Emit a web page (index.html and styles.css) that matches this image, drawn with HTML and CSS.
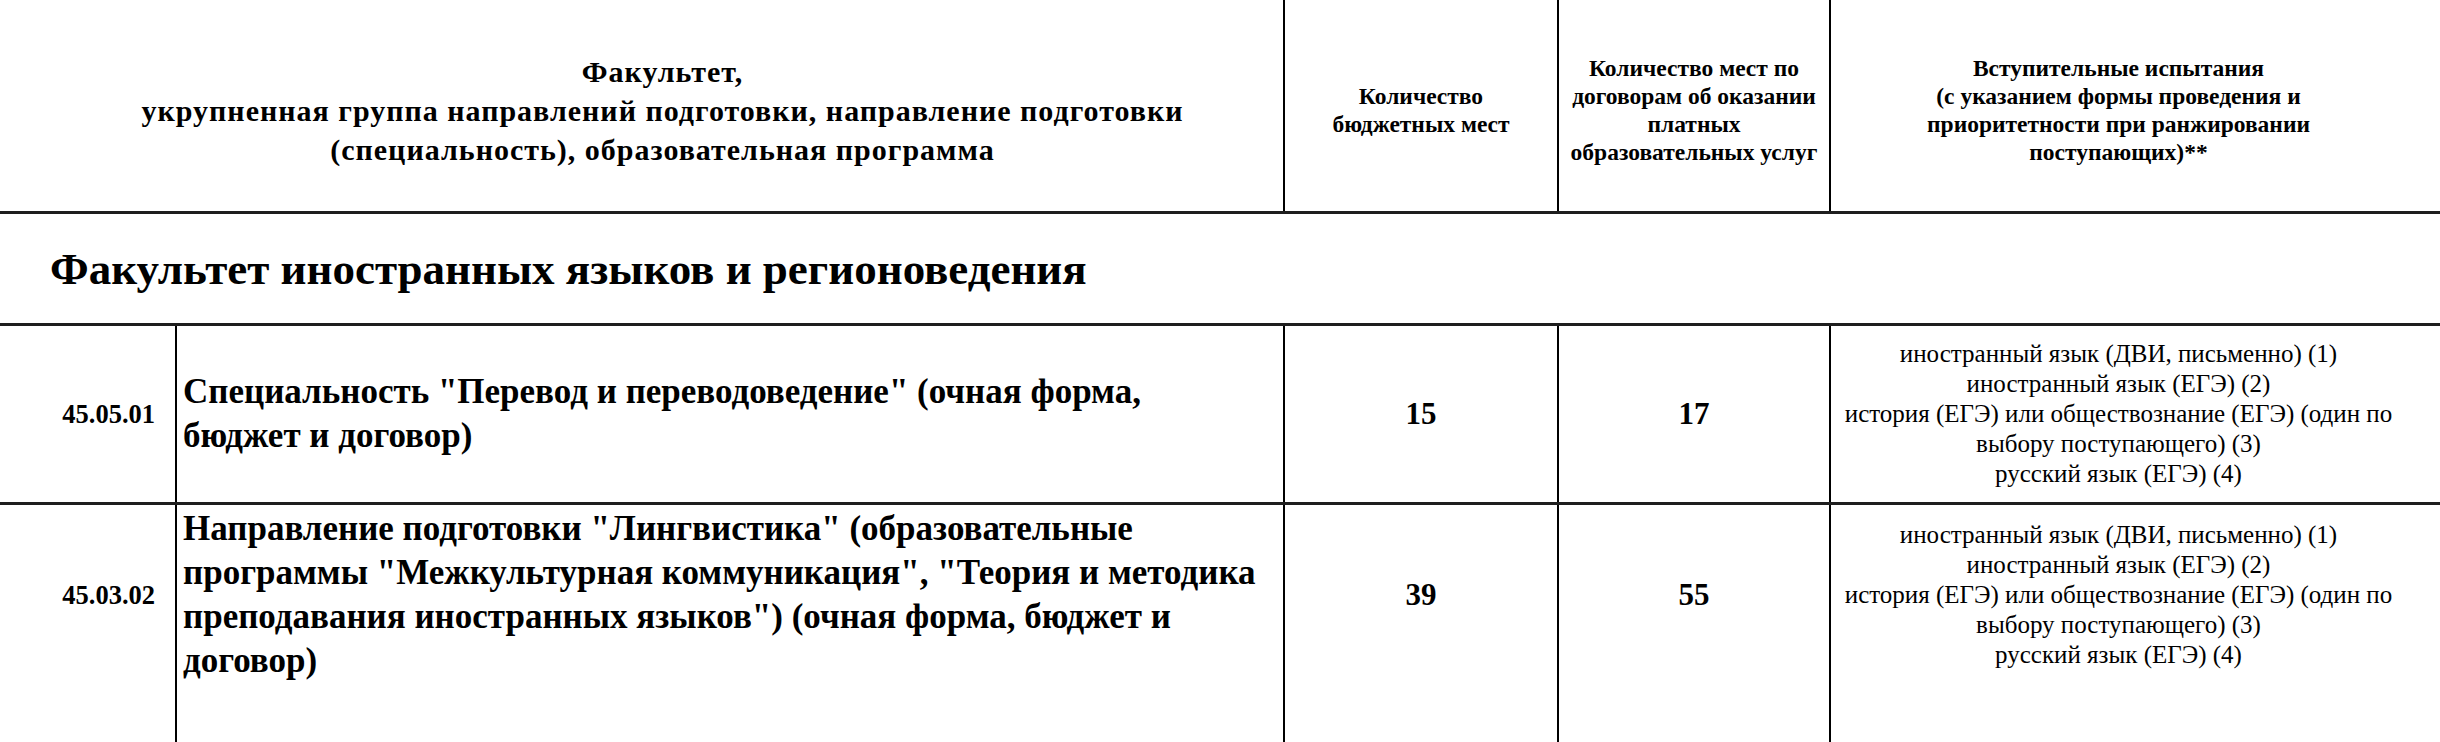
FILE: index.html
```html
<!DOCTYPE html>
<html lang="ru">
<head>
<meta charset="utf-8">
<title>План приема</title>
<link rel="stylesheet" href="styles.css">
</head>
<body>
<table class="plan">
  <colgroup>
    <col class="c-code">
    <col class="c-prog">
    <col class="c-budget">
    <col class="c-paid">
    <col class="c-exams">
  </colgroup>
  <thead>
    <tr class="head">
      <th colspan="2" class="h-main">Факультет,<br>укрупненная группа направлений подготовки, направление подготовки<br>(специальность), образовательная программа</th>
      <th class="h-col">Количество<br>бюджетных мест</th>
      <th class="h-col">Количество мест по<br>договорам об оказании<br>платных<br>образовательных услуг</th>
      <th class="h-col h-exams">Вступительные испытания<br>(с указанием формы проведения и<br>приоритетности при ранжировании<br>поступающих)**</th>
    </tr>
  </thead>
  <tbody>
    <tr class="faculty">
      <td colspan="5">Факультет иностранных языков и регионоведения</td>
    </tr>
    <tr class="prog prog-1">
      <td class="code">45.05.01</td>
      <td class="name">Специальность "Перевод и переводоведение" (очная форма,<br>бюджет и договор)</td>
      <td class="num">15</td>
      <td class="num">17</td>
      <td class="exams">иностранный язык (ДВИ, письменно) (1)<br>иностранный язык (ЕГЭ) (2)<br>история (ЕГЭ) или обществознание (ЕГЭ) (один по<br>выбору поступающего) (3)<br>русский язык (ЕГЭ) (4)</td>
    </tr>
    <tr class="prog prog-2">
      <td class="code">45.03.02</td>
      <td class="name">Направление подготовки "Лингвистика" (образовательные<br>программы "Межкультурная коммуникация", "Теория и методика<br>преподавания иностранных языков") (очная форма, бюджет и<br>договор)</td>
      <td class="num">39</td>
      <td class="num">55</td>
      <td class="exams">иностранный язык (ДВИ, письменно) (1)<br>иностранный язык (ЕГЭ) (2)<br>история (ЕГЭ) или обществознание (ЕГЭ) (один по<br>выбору поступающего) (3)<br>русский язык (ЕГЭ) (4)</td>
    </tr>
    <tr class="filler">
      <td></td><td></td><td></td><td></td><td></td>
    </tr>
  </tbody>
</table>
</body>
</html>
```

FILE: styles.css
```css
html, body {
  margin: 0;
  padding: 0;
  background: #ffffff;
  overflow: hidden;
}

body {
  font-family: "Liberation Serif", "Times New Roman", serif;
  color: #000000;
}

.plan {
  border-collapse: collapse;
  table-layout: fixed;
  width: 2440px;
}

.c-code { width: 176px; }
.c-prog { width: 1108px; }
.c-budget { width: 274px; }
.c-paid { width: 272px; }
.c-exams { width: 610px; }

.plan th,
.plan td {
  padding: 0;
  vertical-align: middle;
  text-align: center;
}

.head th {
  height: 202px;
  padding-top: 9px;
  font-weight: bold;
  border-right: 2px solid #000;
  border-bottom: 3px solid #1e1e1e;
}

.head th.h-main {
  padding-left: 42px;
}

.head th.h-exams {
  border-right: none;
  padding-right: 34px;
}

.h-main {
  font-size: 30px;
  line-height: 39px;
  letter-spacing: 1px;
}

.h-col {
  font-size: 23.5px;
  line-height: 28px;
}

.faculty td {
  height: 109px;
  text-align: left;
  padding-left: 50px;
  font-size: 45px;
  font-weight: bold;
  border-bottom: 3px solid #1e1e1e;
}

.prog td {
  border-right: 2px solid #000;
}

.prog td:last-child,
.filler td:last-child {
  border-right: none;
}

.prog-1 td {
  height: 176px;
  border-bottom: 3px solid #1e1e1e;
}

.prog-2 td {
  height: 180px;
}

.filler td {
  height: 120px;
  border-right: 2px solid #000;
}

.code {
  font-size: 26.5px;
  font-weight: bold;
  text-align: right !important;
  padding-right: 20px !important;
}

.name {
  font-size: 35px;
  line-height: 44px;
  font-weight: bold;
  text-align: left !important;
  padding-left: 6px !important;
}

.num {
  font-size: 31px;
  font-weight: bold;
}

.exams {
  font-size: 25px;
  line-height: 30px;
  padding-right: 34px !important;
}
```
